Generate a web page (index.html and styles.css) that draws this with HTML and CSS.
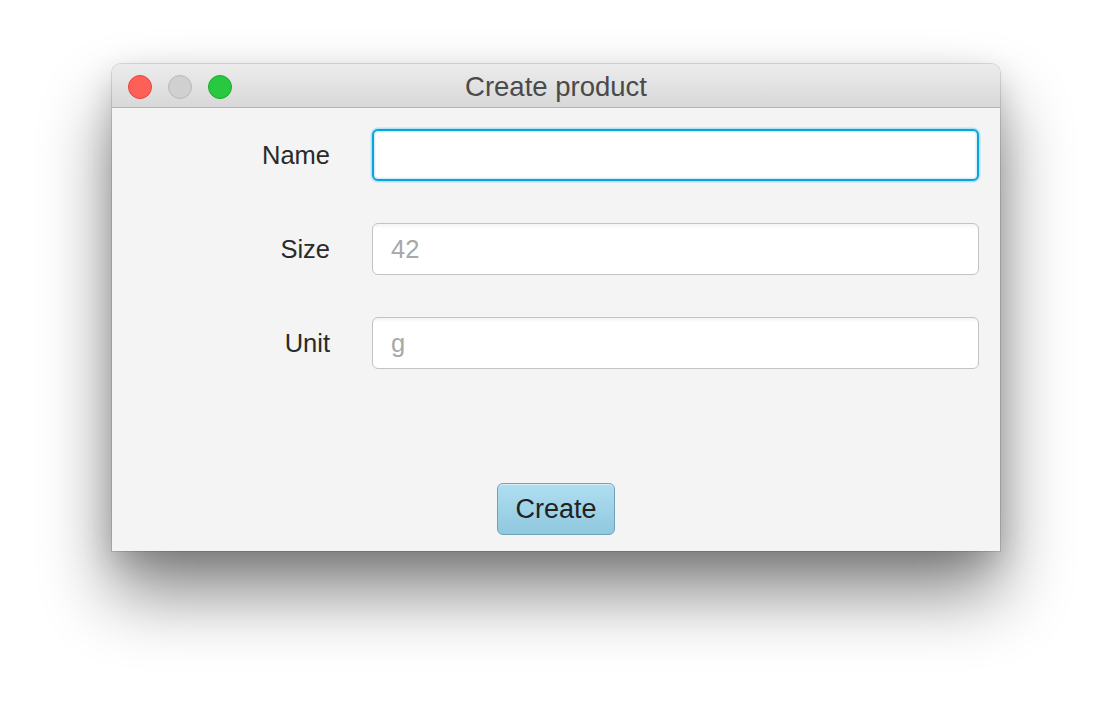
FILE: index.html
```html
<!DOCTYPE html>
<html>
<head>
<meta charset="utf-8">
<link rel="stylesheet" href="styles.css">
</head>
<body>
<div class="desktop">
  <div class="window">
    <div class="titlebar">
      <div class="lights">
        <span class="light red"></span>
        <span class="light gray"></span>
        <span class="light green"></span>
      </div>
      <div class="title">Create product</div>
    </div>
    <div class="content">
      <div class="form">
        <label class="label">Name</label>
        <div class="field focused"></div>
        <label class="label">Size</label>
        <div class="field"><span class="placeholder">42</span></div>
        <label class="label">Unit</label>
        <div class="field"><span class="placeholder">g</span></div>
      </div>
      <div class="actions">
        <button class="button">Create</button>
      </div>
    </div>
  </div>
</div>
</body>
</html>
```

FILE: styles.css
```css
html, body {
  margin: 0;
  padding: 0;
  background: #ffffff;
}
body {
  width: 1112px;
  height: 712px;
  overflow: hidden;
  font-family: "Liberation Sans", Arial, sans-serif;
}
.desktop {
  padding: 64px 0 0 112px;
}
.window {
  width: 888px;
  height: 487px;
  display: flex;
  flex-direction: column;
  border-radius: 9px 9px 0 0;
  background: #f4f4f4;
  box-shadow: 0 0 0 1px rgba(0,0,0,0.12), 0 42px 70px rgba(0,0,0,0.48), 0 10px 30px rgba(0,0,0,0.15);
}
.titlebar {
  height: 43px;
  border-bottom: 1px solid #b4b4b4;
  border-radius: 9px 9px 0 0;
  background: linear-gradient(#ececec, #d8d8d8);
  display: flex;
  align-items: center;
  position: relative;
}
.lights {
  display: flex;
  gap: 16px;
  padding-left: 16px;
  position: absolute;
  left: 0;
  top: 11px;
}
.light {
  width: 22px;
  height: 22px;
  border-radius: 50%;
  display: block;
}
.light.red { background: #fe5f57; border: 1px solid #e2463f; }
.light.gray { background: #d0d0d0; border: 1px solid #b9b9b9; }
.light.green { background: #28c840; border: 1px solid #1aab29; }
.title {
  flex: 1;
  text-align: center;
  font-size: 27.5px;
  color: #4a4a4a;
  padding-top: 3px;
}
.content {
  flex: 1;
  display: flex;
  flex-direction: column;
  padding: 21px 21px 16px 0;
}
.form {
  display: grid;
  grid-template-columns: 218px 1fr;
  column-gap: 42px;
  row-gap: 42px;
  align-items: center;
}
.label {
  text-align: right;
  font-size: 25.5px;
  color: #2a2a2a;
}
.field {
  box-sizing: border-box;
  height: 52px;
  border: 1px solid #c3c3c3;
  border-radius: 6px;
  background: linear-gradient(#f4f4f4, #ffffff 5px);
  display: flex;
  align-items: center;
  padding-left: 18px;
}
.field.focused {
  border: 2px solid #0aa3d8;
  background: #ffffff;
  box-shadow: 0 0 0 1.5px #b2e2f3, inset 0 0 0 1.5px #d6eff9;
}
.placeholder {
  font-size: 25.5px;
  color: #a8a8a8;
}
.actions {
  flex: 1;
  display: flex;
  justify-content: center;
  align-items: flex-end;
  padding-left: 21px;
}
.button {
  width: 118px;
  height: 52px;
  border: 1px solid #72a2b7;
  border-radius: 6px;
  background: linear-gradient(#b0def1, #8fc8df);
  font-family: "Liberation Sans", Arial, sans-serif;
  font-size: 27px;
  color: #222222;
  padding: 0;
  box-shadow: inset 0 1px 0 rgba(255,255,255,0.5);
}
```
